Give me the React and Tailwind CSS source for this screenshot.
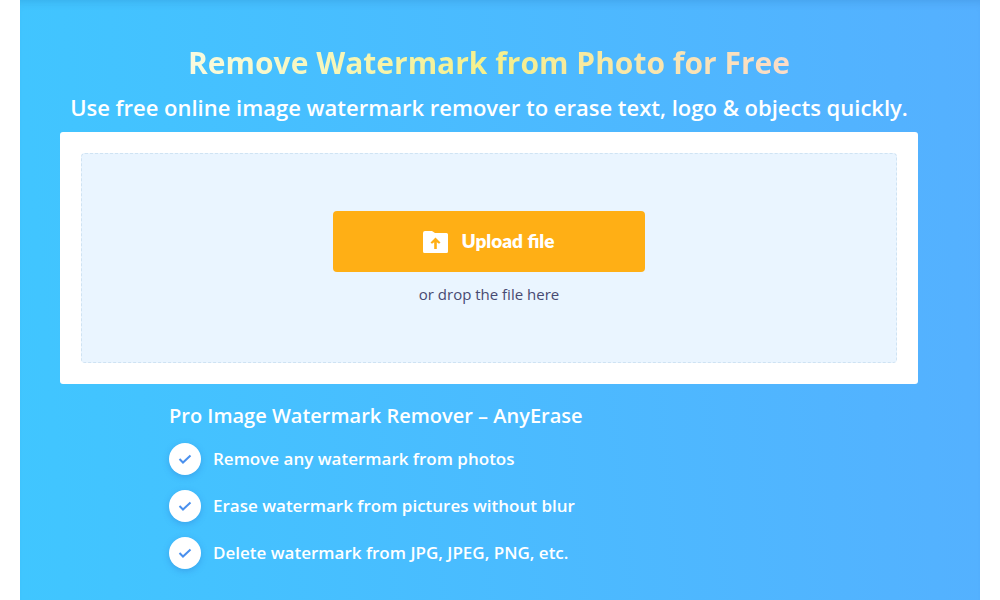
const features = [
  "Remove any watermark from photos",
  "Erase watermark from pictures without blur",
  "Delete watermark from JPG, JPEG, PNG, etc.",
];

function FolderUploadIcon() {
  return (
    <svg width="26" height="24" viewBox="0 0 26 24" aria-hidden="true">
      <path
        fill="#fff"
        fillRule="evenodd"
        d="M2 1h7l3 2h11.500A1.500 1.500 0 0 1 25 4.500v17a1.500 1.500 0 0 1-1.500 1.500h-22A1.500 1.500 0 0 1 0 21.500V3a2 2 0 0 1 2-2zM12.500 7.500l-5 5 1.500 1.300 2.200-1.500v6.700h2.600v-6.700l2.200 1.500 1.500-1.300z"
      />
    </svg>
  );
}

function CheckIcon() {
  return (
    <svg width="16" height="16" viewBox="0 0 16 16" fill="none" aria-hidden="true">
      <path d="M2.500 8l3.500 3.500 7.500-7" stroke="#4a90ee" strokeWidth="2" />
    </svg>
  );
}

export default function App() {
  return (
    <div className="min-h-screen bg-white px-5 font-['Open_Sans',sans-serif]">
      <main className="min-h-screen bg-linear-[85deg,#40c6ff,#55b0ff] pl-10 pr-[62px] pt-10 text-white shadow-[inset_0_8px_8px_-6px_rgba(0,60,120,0.15)]">
        <header className="text-center">
          <h1 className="mx-auto w-fit whitespace-nowrap bg-linear-to-r from-[#f8fbe0] via-[#f5f08a] to-[#fbdcc8] bg-clip-text text-[30px] leading-[46px] font-bold text-transparent">
            Remove Watermark from Photo for Free
          </h1>
          <p className="whitespace-nowrap pb-1 text-[22px] leading-[42px] font-semibold">
            Use free online image watermark remover to erase text, logo &amp; objects quickly.
          </p>
        </header>

        <section className="rounded-[3px] bg-white p-[21px]">
          <div className="flex h-[210px] flex-col items-center rounded-sm border border-dashed border-[#cfe3f3] bg-[#eaf5ff] pt-[57px]">
            <button
              type="button"
              className="flex h-[61px] w-[312px] items-center justify-center gap-3 rounded bg-[#ffaf15] font-['Lato',sans-serif] text-[19px] font-extrabold text-white"
            >
              <FolderUploadIcon />
              Upload file
            </button>
            <p className="mt-3 text-[15px] leading-[20px] text-[#474a72]">or drop the file here</p>
          </div>
        </section>

        <section className="ml-[109px] pt-4">
          <h2 className="text-[20px] leading-[32px] font-semibold">
            Pro Image Watermark Remover – AnyErase
          </h2>
          <ul className="mt-[11px] space-y-[15px]">
            {features.map((feature) => (
              <li key={feature} className="flex items-center gap-3 text-[17px] leading-[32px] font-semibold">
                <span className="flex size-8 items-center justify-center rounded-full bg-white shadow-[0_2px_6px_rgba(40,110,200,0.35)]">
                  <CheckIcon />
                </span>
                {feature}
              </li>
            ))}
          </ul>
        </section>
      </main>
    </div>
  );
}
